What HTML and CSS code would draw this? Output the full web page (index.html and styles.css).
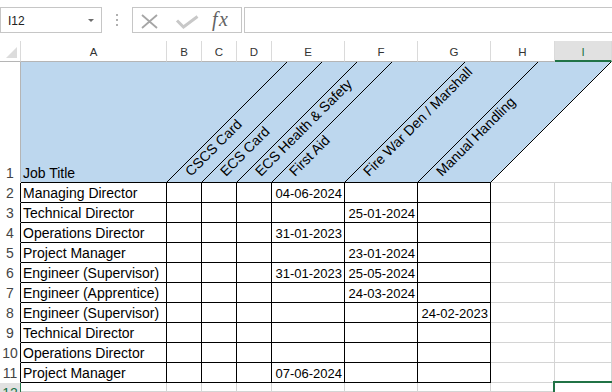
FILE: index.html
```html
<!DOCTYPE html>
<html>
<head>
<meta charset="utf-8">
<link rel="stylesheet" href="styles.css">
</head>
<body>
<div class="fbar">
  <div class="namebox"><span class="nb-text">I12</span><span class="nb-arrow"></span></div>
  <div class="dots"><span></span><span></span><span></span></div>
  <div class="fxbox">
    <svg class="fx-svg" width="108" height="24" viewBox="0 0 108 24">
      <path d="M9 7 L24 20 M24 7 L9 20" stroke="#a6a6a6" stroke-width="1.8" fill="none"/>
      <path d="M44 12.5 L50.5 19 L64.5 8.5" stroke="#c8c8c8" stroke-width="3" fill="none"/>
      <text x="79" y="18" class="fx-text">fx</text>
    </svg>
  </div>
  <div class="finput"></div>
</div>

<div class="grid">
  <!-- header row -->
  <div class="c ch corner"><svg width="20" height="20" viewBox="0 0 20 20"><polygon points="6,17 17,17 17,6" fill="#dcdcdc"/></svg></div>
  <div class="c ch">A</div>
  <div class="c ch">B</div>
  <div class="c ch">C</div>
  <div class="c ch">D</div>
  <div class="c ch">E</div>
  <div class="c ch">F</div>
  <div class="c ch">G</div>
  <div class="c ch">H</div>
  <div class="c ch selcol">I</div>

  <!-- row 1 -->
  <div class="c rh rh1">1</div>
  <div class="r1">
    <svg width="591" height="121" viewBox="21 62 591 121" class="r1-svg">
      <polygon points="21,62 610.5,62 490.5,182 21,182" fill="#bdd7ee"/>
      <g stroke="#000" stroke-width="1" shape-rendering="crispEdges">
        <line x1="166.5" y1="182.5" x2="287" y2="62"/>
        <line x1="201.5" y1="182.5" x2="322" y2="62"/>
        <line x1="236.5" y1="182.5" x2="357" y2="62"/>
        <line x1="271.5" y1="182.5" x2="392" y2="62"/>
        <line x1="344.5" y1="182.5" x2="465" y2="62"/>
        <line x1="417.5" y1="182.5" x2="538" y2="62"/>
        <line x1="490.5" y1="182.5" x2="611" y2="62"/>
        <line x1="21" y1="182.5" x2="491" y2="182.5"/>
      </g>
      <line x1="491" y1="182.5" x2="612" y2="182.5" stroke="#d4d4d4" shape-rendering="crispEdges"/>
      <text x="23" y="178" class="hd">Job Title</text>
      <text transform="translate(191 177) rotate(-45)" class="hd">CSCS Card</text>
      <text transform="translate(226 177) rotate(-45)" class="hd">ECS Card</text>
      <text transform="translate(261 177) rotate(-45)" class="hd">ECS Health &amp; Safety</text>
      <text transform="translate(295 177) rotate(-45)" class="hd">First Aid</text>
      <text transform="translate(369 177) rotate(-45)" class="hd">Fire War Den / Marshall</text>
      <text transform="translate(442 177) rotate(-45)" class="hd">Manual Handling</text>
    </svg>
  </div>

  <!-- row 2 -->
  <div class="c rh tb">2</div>
  <div class="c t">Managing Director</div>
  <div class="c t"></div><div class="c t"></div><div class="c t"></div>
  <div class="c t d">04-06-2024</div>
  <div class="c t"></div><div class="c t"></div>
  <div class="c"></div><div class="c"></div>

  <!-- row 3 -->
  <div class="c rh tb">3</div>
  <div class="c t">Technical Director</div>
  <div class="c t"></div><div class="c t"></div><div class="c t"></div>
  <div class="c t"></div>
  <div class="c t d">25-01-2024</div>
  <div class="c t"></div>
  <div class="c"></div><div class="c"></div>

  <!-- row 4 -->
  <div class="c rh tb">4</div>
  <div class="c t">Operations Director</div>
  <div class="c t"></div><div class="c t"></div><div class="c t"></div>
  <div class="c t d">31-01-2023</div>
  <div class="c t"></div><div class="c t"></div>
  <div class="c"></div><div class="c"></div>

  <!-- row 5 -->
  <div class="c rh tb">5</div>
  <div class="c t">Project Manager</div>
  <div class="c t"></div><div class="c t"></div><div class="c t"></div>
  <div class="c t"></div>
  <div class="c t d">23-01-2024</div>
  <div class="c t"></div>
  <div class="c"></div><div class="c"></div>

  <!-- row 6 -->
  <div class="c rh tb">6</div>
  <div class="c t">Engineer (Supervisor)</div>
  <div class="c t"></div><div class="c t"></div><div class="c t"></div>
  <div class="c t d">31-01-2023</div>
  <div class="c t d">25-05-2024</div>
  <div class="c t"></div>
  <div class="c"></div><div class="c"></div>

  <!-- row 7 -->
  <div class="c rh tb">7</div>
  <div class="c t">Engineer (Apprentice)</div>
  <div class="c t"></div><div class="c t"></div><div class="c t"></div>
  <div class="c t"></div>
  <div class="c t d">24-03-2024</div>
  <div class="c t"></div>
  <div class="c"></div><div class="c"></div>

  <!-- row 8 -->
  <div class="c rh tb">8</div>
  <div class="c t">Engineer (Supervisor)</div>
  <div class="c t"></div><div class="c t"></div><div class="c t"></div>
  <div class="c t"></div>
  <div class="c t"></div>
  <div class="c t d">24-02-2023</div>
  <div class="c"></div><div class="c"></div>

  <!-- row 9 -->
  <div class="c rh tb">9</div>
  <div class="c t">Technical Director</div>
  <div class="c t"></div><div class="c t"></div><div class="c t"></div>
  <div class="c t"></div><div class="c t"></div><div class="c t"></div>
  <div class="c"></div><div class="c"></div>

  <!-- row 10 -->
  <div class="c rh tb">10</div>
  <div class="c t">Operations Director</div>
  <div class="c t"></div><div class="c t"></div><div class="c t"></div>
  <div class="c t"></div><div class="c t"></div><div class="c t"></div>
  <div class="c"></div><div class="c"></div>

  <!-- row 11 -->
  <div class="c rh tb">11</div>
  <div class="c t">Project Manager</div>
  <div class="c t"></div><div class="c t"></div><div class="c t"></div>
  <div class="c t d">07-06-2024</div>
  <div class="c t"></div><div class="c t"></div>
  <div class="c"></div><div class="c"></div>

  <!-- row 12 -->
  <div class="c rh selrow">12</div>
  <div class="c"></div><div class="c"></div><div class="c"></div><div class="c"></div>
  <div class="c"></div><div class="c"></div><div class="c"></div><div class="c"></div>
  <div class="c selcell"></div>
</div>
</body>
</html>
```

FILE: styles.css
```css
html, body {
  margin: 0;
  padding: 0;
  background: #ffffff;
}
body {
  width: 612px;
  height: 392px;
  overflow: hidden;
  font-family: "Liberation Sans", Arial, sans-serif;
  color: #000;
}

/* formula bar */
.fbar {
  display: flex;
  align-items: flex-start;
  height: 41px;
  padding-top: 7px;
  box-sizing: border-box;
}
.namebox {
  width: 102px;
  height: 26px;
  box-sizing: border-box;
  border: 1px solid #c6c6c6;
  display: flex;
  align-items: center;
  padding-left: 7px;
  padding-top: 1px;
}
.nb-text {
  font-size: 12px;
  line-height: 22px;
  color: #222;
}
.nb-arrow {
  margin-left: auto;
  margin-right: 7px;
  width: 0;
  height: 0;
  border-left: 3px solid transparent;
  border-right: 3px solid transparent;
  border-top: 3px solid #6d6d6d;
}
.dots {
  margin-left: 14px;
  margin-top: 7px;
  display: flex;
  flex-direction: column;
  gap: 3px;
}
.dots span {
  display: block;
  width: 2px;
  height: 2px;
  background: #b0b0b0;
}
.fxbox {
  margin-left: 14px;
  width: 110px;
  height: 26px;
  box-sizing: border-box;
  border: 1px solid #c6c6c6;
}
.fx-svg {
  display: block;
}
.fx-text {
  font-family: "Liberation Serif", "Times New Roman", serif;
  font-style: italic;
  font-size: 20px;
  letter-spacing: 1.5px;
  fill: #636363;
}
.finput {
  margin-left: 2px;
  flex: 1;
  height: 26px;
  box-sizing: border-box;
  border: 1px solid #c6c6c6;
  border-right: none;
}

/* sheet grid */
.grid {
  display: grid;
  grid-template-columns: 21px 146px 35px 35px 35px 73px 73px 73px 64px 57px;
  grid-template-rows: 21px 121px repeat(10, 20px) 9px;
}
.c {
  box-sizing: border-box;
  border-right: 1px solid #d4d4d4;
  border-bottom: 1px solid #d4d4d4;
  font-size: 14px;
  line-height: 17px;
  padding: 2px 2px 0 2px;
  white-space: nowrap;
}
.t {
  border-right-color: #000;
  border-bottom-color: #000;
}
.d {
  text-align: right;
  font-size: 13px;
}

/* column headers */
.ch {
  font-size: 11.5px;
  color: #333;
  text-align: center;
  padding: 3px 0 0;
  border-right-color: #dadada;
  border-bottom-color: #b5b5b5;
}
.corner {
  padding: 0;
}
.corner svg {
  display: block;
}
.selcol {
  background: #e1e1e1;
  color: #217346;
  border-bottom: 2px solid #217346;
}

/* row headers */
.rh {
  color: #444;
  text-align: center;
  padding: 2px 0 0;
  border-right-color: #b5b5b5;
  border-bottom-color: transparent;
}
.rh.tb {
  border-right-color: #000;
}
.rh1 {
  display: flex;
  align-items: flex-end;
  justify-content: center;
  padding: 0;
}
.selrow {
  background: #e1e1e1;
  color: #217346;
  border-right-color: #217346;
  border-bottom: none;
  overflow: hidden;
}

/* row 1 rotated headers */
.r1 {
  grid-column: 2 / -1;
  height: 121px;
}
.r1-svg {
  display: block;
}
.hd {
  font-family: "Liberation Sans", Arial, sans-serif;
  font-size: 14px;
  fill: #000;
}

/* active cell */
.selcell {
  position: relative;
  border-bottom: none;
}
.selcell::after {
  content: "";
  position: absolute;
  left: -2px;
  top: -2px;
  width: 80px;
  height: 20px;
  border: 2px solid #217346;
}
```
